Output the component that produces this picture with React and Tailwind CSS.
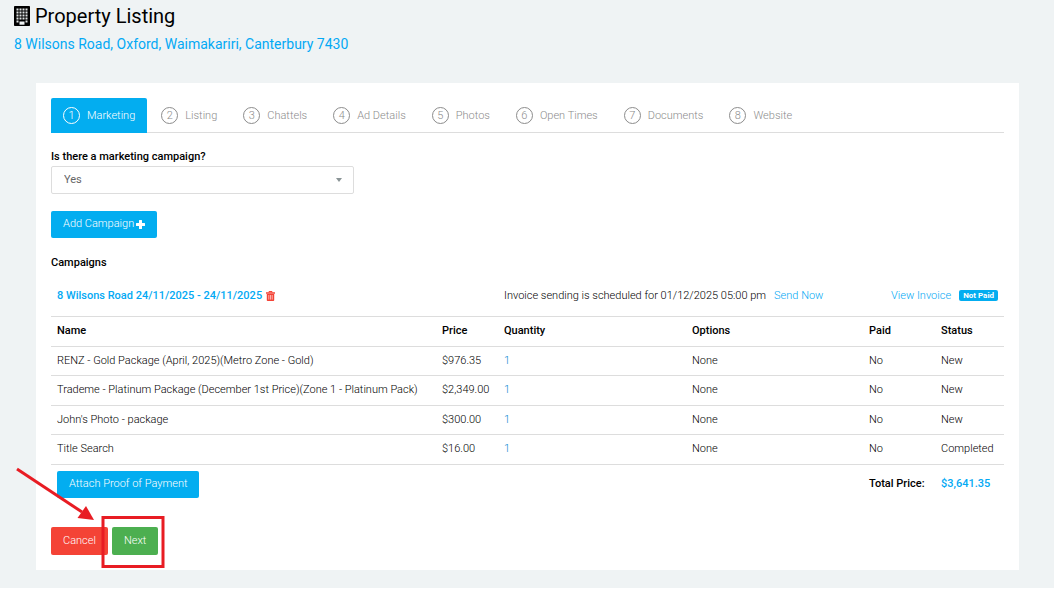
import React from "react";

const steps = ["Marketing", "Listing", "Chattels", "Ad Details", "Photos", "Open Times", "Documents", "Website"];

const items = [
  { name: "RENZ - Gold Package (April, 2025)(Metro Zone - Gold)", price: "$976.35", status: "New" },
  { name: "Trademe - Platinum Package (December 1st Price)(Zone 1 - Platinum Pack)", price: "$2,349.00", status: "New" },
  { name: "John's Photo - package", price: "$300.00", status: "New" },
  { name: "Title Search", price: "$16.00", status: "Completed" },
];

function BuildingIcon() {
  const xs = [3, 6, 9, 12];
  const ys = [3, 6, 9, 12];
  return (
    <svg className="h-5 w-4 shrink-0" viewBox="0 0 16 20" aria-hidden="true">
      <path fill="#000" d="M.8 0h14.4q.8 0 .8.8v18.4q0 .8-.8.8H.8q-.8 0-.8-.8V.8Q0 0 .8 0Z" />
      {ys.map((y) => xs.map((x) => <rect key={`${x}-${y}`} x={x - 0.5} y={y - 0.5} width="2" height="2" fill="#dfe3e4" />))}
      <rect x="2.5" y="14.5" width="2" height="2" fill="#dfe3e4" />
      <rect x="11.5" y="14.5" width="2" height="2" fill="#dfe3e4" />
      <rect x="5.5" y="15.5" width="5" height="3.2" fill="#f0f4f5" />
    </svg>
  );
}

function PlusIcon() {
  return (
    <svg className="size-[9px]" viewBox="0 0 9 9" aria-hidden="true">
      <path fill="currentColor" d="M3 .5q0-.5.5-.5h2q.5 0 .5.5V3h2.500q.5 0 .5.5v2q0 .5-.5.5H6v2.500q0 .5-.5.5h-2q-.5 0-.5-.5V6H.5Q0 6 0 5.500v-2Q0 3 .5 3H3z" />
    </svg>
  );
}

function TrashIcon() {
  return (
    <svg className="h-[10px] w-[9px]" viewBox="0 0 9 10" aria-hidden="true">
      <path fill="none" stroke="#f44336" d="M3 1.5V.5h3v1" />
      <path fill="#f44336" d="M0 1.2h9v1.6H0zM.8 3h7.4v6.2q0 .8-.8.8H1.600q-.8 0-.8-.8z" />
      <path stroke="#fff" strokeWidth=".6" d="M2.800 4v4.600M4.500 4v4.600M6.200 4v4.600" />
    </svg>
  );
}

function Tabs() {
  return (
    <nav className="flex flex-wrap gap-x-[2px] border-b border-[#dddddd]">
      {steps.map((label, i) => (
        <button
          key={label}
          type="button"
          className={
            i === 0
              ? "-mb-px flex h-[35px] items-center gap-[7px] rounded-t-[2px] bg-[#03adf0] px-3 text-white"
              : "-mb-px flex h-[35px] items-center gap-[7px] px-3 text-[#8c8c8c]"
          }
        >
          <span className="flex size-[17px] items-center justify-center rounded-full border border-current">{i + 1}</span>
          {label}
        </button>
      ))}
    </nav>
  );
}

function CampaignTable() {
  const head = "px-[6px] text-left font-medium text-black";
  const cell = "px-[6px]";
  return (
    <table className="w-full table-fixed border-collapse whitespace-nowrap">
      <colgroup>
        <col />
        <col className="w-[62px]" />
        <col className="w-[188px]" />
        <col className="w-[177px]" />
        <col className="w-[72px]" />
        <col className="w-[69px]" />
      </colgroup>
      <thead>
        <tr className="h-10 border-b border-[#dddddd]">
          <td colSpan={2} className="px-[6px]">
            <div className="flex items-center gap-1">
              <a href="#campaign" className="font-medium text-[#03a9f4]">8 Wilsons Road 24/11/2025 - 24/11/2025</a>
              <button type="button" aria-label="Delete campaign"><TrashIcon /></button>
            </div>
          </td>
          <td colSpan={2} className="px-[6px]">
            <div className="flex items-center gap-2">
              <span>Invoice sending is scheduled for 01/12/2025 05:00 pm</span>
              <a href="#send" className="text-[#03a9f4]">Send Now</a>
            </div>
          </td>
          <td colSpan={2} className="px-[6px]">
            <div className="flex items-center justify-end gap-2">
              <a href="#invoice" className="text-[#03a9f4]">View Invoice</a>
              <span className="rounded-[2px] bg-[#03adf0] px-1 text-[8px] leading-[11px] font-bold text-white">Not Paid</span>
            </div>
          </td>
        </tr>
        <tr className="h-[30px] border-b border-[#dddddd]">
          <th className={head}>Name</th>
          <th className={head}>Price</th>
          <th className={head}>Quantity</th>
          <th className={head}>Options</th>
          <th className={head}>Paid</th>
          <th className={head}>Status</th>
        </tr>
      </thead>
      <tbody>
        {items.map((item) => (
          <tr key={item.name} className="border-b border-[#dddddd] odd:h-[29px] even:h-[30px]">
            <td className={cell}>{item.name}</td>
            <td className={cell}>{item.price}</td>
            <td className={cell}><a href="#quantity" className="text-[#0288d1]">1</a></td>
            <td className={cell}>None</td>
            <td className={cell}>No</td>
            <td className={cell}>{item.status}</td>
          </tr>
        ))}
      </tbody>
      <tfoot>
        <tr className="h-10">
          <td colSpan={4} className="px-[6px]">
            <button type="button" className="flex h-[27px] items-center rounded-[2px] bg-[#03adf0] px-3 pb-px text-white">
              Attach Proof of Payment
            </button>
          </td>
          <td className="px-[6px] font-medium text-black">Total Price:</td>
          <td className="px-[6px] font-medium text-[#03a9f4]">$3,641.35</td>
        </tr>
      </tfoot>
    </table>
  );
}

export default function App() {
  return (
    <div className="relative bg-[#eff3f4] pb-[18px] font-['Roboto',sans-serif] text-[11px] leading-4 font-light text-black">
      <header className="px-[14px] pt-1">
        <h1 className="flex items-center gap-[5px] text-[20px] leading-6 font-normal text-black">
          <BuildingIcon />
          Property Listing
        </h1>
        <p className="mt-[6px] text-[14px] leading-5 font-normal text-[#03a9f4]">8 Wilsons Road, Oxford, Waimakariri, Canterbury 7430</p>
      </header>

      <main className="mr-[35px] ml-9 mt-[29px] bg-white p-[15px]">
        <Tabs />

        <div className="mt-4 w-[303px]">
          <label htmlFor="campaign" className="block font-medium text-black">Is there a marketing campaign?</label>
          <div className="relative mt-px">
            <select
              id="campaign"
              defaultValue="Yes"
              className="block h-7 w-full appearance-none rounded-[2px] border border-[#dddddd] bg-white px-3 font-normal text-[#666666]"
            >
              <option>Yes</option>
              <option>No</option>
            </select>
            <svg className="pointer-events-none absolute top-3 right-3 h-1 w-[6px]" viewBox="0 0 6 4" aria-hidden="true">
              <path fill="#8a9496" d="M0 0h6L3 4z" />
            </svg>
          </div>
        </div>

        <button type="button" className="mt-[17px] flex h-[27px] items-center gap-[2px] rounded-[2px] bg-[#03adf0] px-3 pb-px text-white">
          Add Campaign
          <PlusIcon />
        </button>

        <h2 className="mt-[17px] mb-[5px] font-medium text-black">Campaigns</h2>

        <CampaignTable />

        <div className="mt-[23px] flex gap-1">
          <button type="button" className="flex h-7 items-center rounded-[2px] bg-[#f44336] px-3 text-white">Cancel</button>
          <button type="button" className="flex h-7 items-center rounded-[2px] bg-[#4caf50] px-3 text-white">Next</button>
        </div>
      </main>

      <svg className="pointer-events-none absolute bottom-[18px] left-0 h-[110px] w-[180px]" viewBox="0 0 180 110" aria-hidden="true">
        <path stroke="#e81c23" strokeWidth="3" d="M17 9 82 52" />
        <path fill="#e81c23" d="M94 60 77.500 58 86 46z" />
        <rect x="103" y="57.500" width="60" height="49" fill="none" stroke="#e81c23" strokeWidth="3" />
      </svg>
    </div>
  );
}
